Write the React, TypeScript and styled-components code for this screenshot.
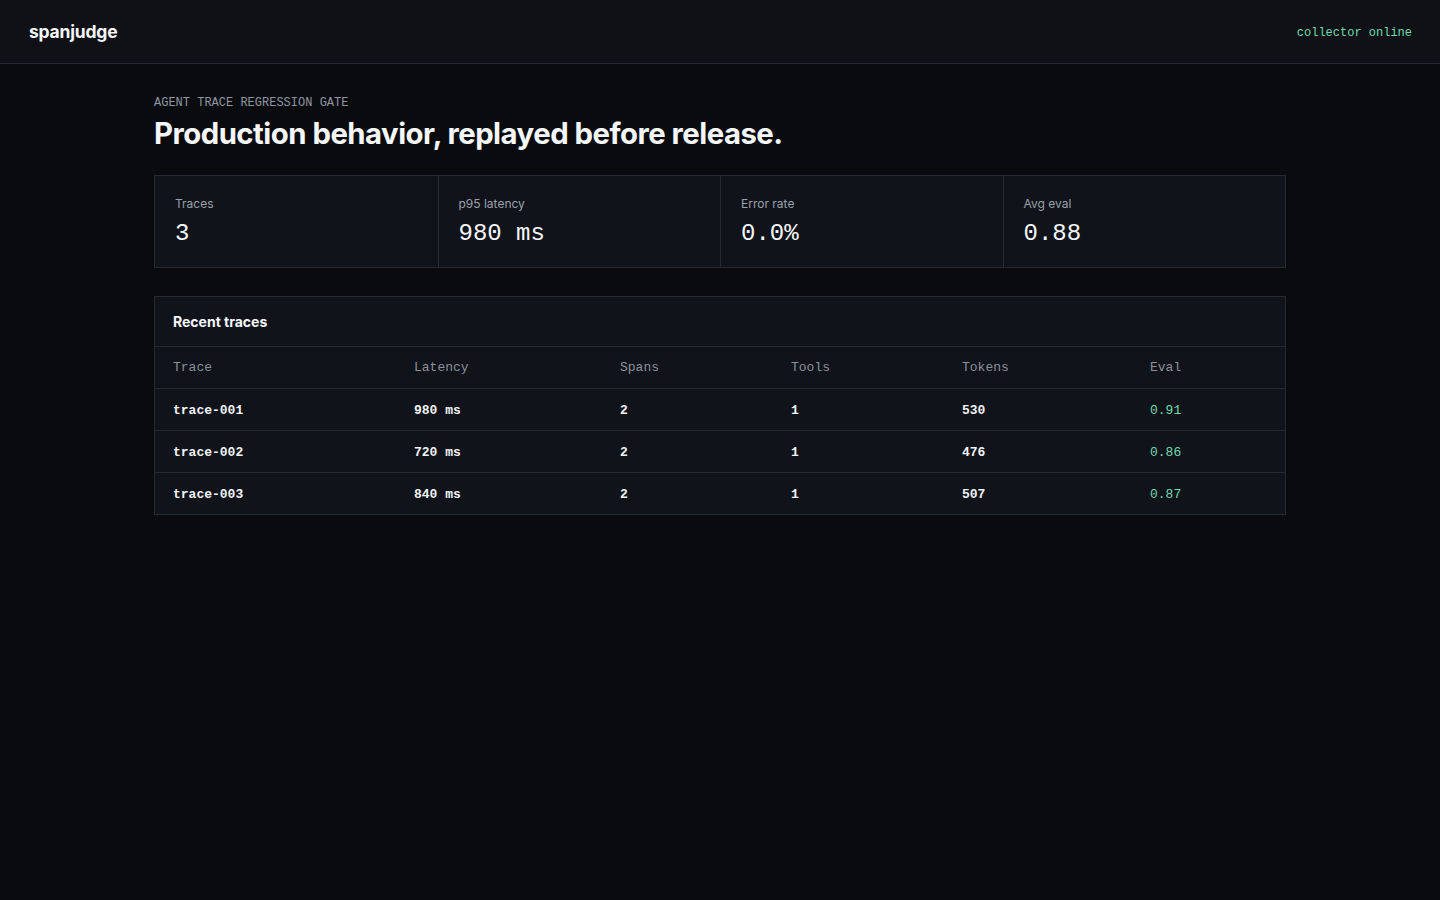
import styled, { createGlobalStyle } from 'styled-components'

const GlobalStyle = createGlobalStyle`
  html, body {
    margin: 0;
    padding: 0;
    background: #0a0b0e;
    color: #f0f3f6;
    font-family: Inter, "Noto Sans", sans-serif;
  }
  #root {
    min-height: 100vh;
  }
`

const mono = `"Liberation Mono", "DejaVu Sans Mono", monospace`

const TopBar = styled.header`
  display: flex;
  justify-content: space-between;
  align-items: center;
  height: 63px;
  padding: 0 28px 0 29px;
  background: #0f1116;
  border-bottom: 1px solid #23272e;
`

const Brand = styled.div`
  font-size: 17.5px;
  font-weight: 700;
  letter-spacing: -0.2px;
  color: #f5f7fa;
`

const Status = styled.div`
  font-family: ${mono};
  font-size: 12px;
  margin-top: 2px;
  color: #6fdcab;
`

const Main = styled.main`
  max-width: 1132px;
  margin: 0 auto;
  padding-top: 32px;
`

const Eyebrow = styled.div`
  font-family: ${mono};
  font-size: 12px;
  line-height: 14px;
  color: #8f96a0;
`

const Title = styled.h1`
  margin: 5px 0 22px;
  font-size: 29.3px;
  font-weight: 700;
  letter-spacing: -0.5px;
  line-height: 38px;
  color: #f5f7fa;
`

const StatGrid = styled.section`
  display: grid;
  grid-template-columns: repeat(4, 1fr);
  border: 1px solid #262b33;
  background: #10131a;
`

const StatCard = styled.div`
  padding: 20px;
  height: 51px;
  & + & {
    border-left: 1px solid #262b33;
  }
`

const StatLabel = styled.div`
  font-size: 12px;
  color: #9aa1ab;
  line-height: 15px;
`

const StatValue = styled.div`
  margin-top: 10px;
  font-family: ${mono};
  font-size: 24px;
  line-height: 26px;
  color: #f5f7fa;
`

const Panel = styled.section`
  margin-top: 28px;
  border: 1px solid #262b33;
  background: #10131a;
`

const PanelHead = styled.div`
  height: 49px;
  display: flex;
  align-items: center;
  padding: 0 18px;
  font-size: 14px;
  font-weight: 700;
  color: #f5f7fa;
  border-bottom: 1px solid #262b33;
`

const Table = styled.table`
  width: 100%;
  border-collapse: collapse;
  table-layout: fixed;
  font-family: ${mono};
  font-size: 13px;
`

const Th = styled.th<{ w: number }>`
  box-sizing: border-box;
  width: ${(p) => p.w}px;
  height: 41px;
  padding: 1px 18px 0;
  text-align: left;
  font-weight: 400;
  color: #8a919b;
  border-bottom: 1px solid #262b33;
`

const Td = styled.td<{ good?: boolean }>`
  height: 39px;
  padding: 2px 18px 0;
  color: ${(p) => (p.good ? '#6fdcab' : '#f0f3f6')};
  font-weight: ${(p) => (p.good ? 400 : 700)};
  tr:not(:last-child) > & {
    border-bottom: 1px solid #262b33;
  }
`

const stats = [
  { label: 'Traces', value: '3' },
  { label: 'p95 latency', value: '980 ms' },
  { label: 'Error rate', value: '0.0%' },
  { label: 'Avg eval', value: '0.88' },
]

const columns = [
  { name: 'Trace', w: 241 },
  { name: 'Latency', w: 206 },
  { name: 'Spans', w: 171 },
  { name: 'Tools', w: 171 },
  { name: 'Tokens', w: 188 },
  { name: 'Eval', w: 153 },
]

const traces = [
  { id: 'trace-001', latency: '980 ms', spans: 2, tools: 1, tokens: 530, evalScore: '0.91' },
  { id: 'trace-002', latency: '720 ms', spans: 2, tools: 1, tokens: 476, evalScore: '0.86' },
  { id: 'trace-003', latency: '840 ms', spans: 2, tools: 1, tokens: 507, evalScore: '0.87' },
]

export default function App() {
  return (
    <>
      <GlobalStyle />
      <TopBar>
        <Brand>spanjudge</Brand>
        <Status>collector online</Status>
      </TopBar>
      <Main>
        <Eyebrow>AGENT TRACE REGRESSION GATE</Eyebrow>
        <Title>Production behavior, replayed before release.</Title>
        <StatGrid>
          {stats.map((s) => (
            <StatCard key={s.label}>
              <StatLabel>{s.label}</StatLabel>
              <StatValue>{s.value}</StatValue>
            </StatCard>
          ))}
        </StatGrid>
        <Panel>
          <PanelHead>Recent traces</PanelHead>
          <Table>
            <thead>
              <tr>
                {columns.map((c) => (
                  <Th key={c.name} w={c.w}>
                    {c.name}
                  </Th>
                ))}
              </tr>
            </thead>
            <tbody>
              {traces.map((t) => (
                <tr key={t.id}>
                  <Td>{t.id}</Td>
                  <Td>{t.latency}</Td>
                  <Td>{t.spans}</Td>
                  <Td>{t.tools}</Td>
                  <Td>{t.tokens}</Td>
                  <Td good>{t.evalScore}</Td>
                </tr>
              ))}
            </tbody>
          </Table>
        </Panel>
      </Main>
    </>
  )
}
